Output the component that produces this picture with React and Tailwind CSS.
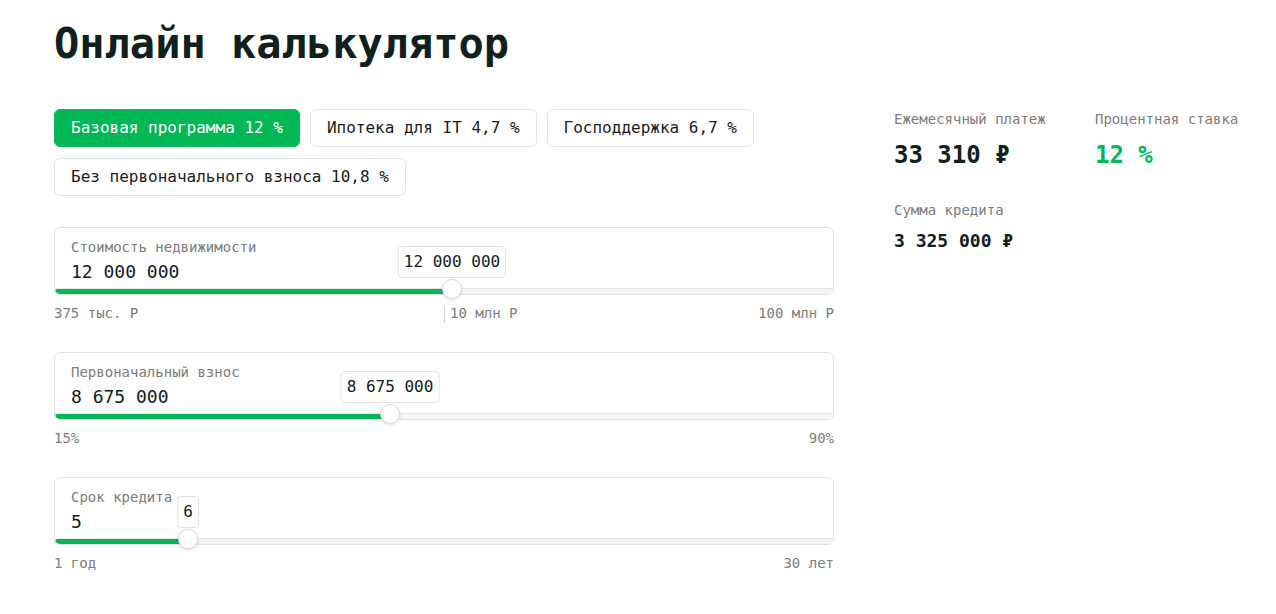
import React from "react";

const tabs = [
  { label: "Базовая программа 12 %", active: true },
  { label: "Ипотека для IT 4,7 %" },
  { label: "Господдержка 6,7 %" },
  { label: "Без первоначального взноса 10,8 %" },
];

const sliders = [
  {
    label: "Стоимость недвижимости",
    value: "12 000 000",
    pos: 398,
    min: "375 тыс. Р",
    max: "100 млн Р",
    mid: "10 млн Р",
  },
  {
    label: "Первоначальный взнос",
    value: "8 675 000",
    pos: 336,
    min: "15%",
    max: "90%",
  },
  {
    label: "Срок кредита",
    value: "5",
    tip: "6",
    pos: 134,
    min: "1 год",
    max: "30 лет",
  },
];

function Slider({ item, first }) {
  return (
    <div className={first ? "mt-[31px]" : "mt-[29px]"}>
      <div className="flex flex-col overflow-hidden rounded-md border border-[#e2e2e2] bg-white">
        <div className="px-4 pt-[9px] text-[14px] leading-5 text-[#7c7c7c]">{item.label}</div>
        <div className="mt-[3px] px-4 text-[18px] leading-6 text-[#10201c]">{item.value}</div>
        <div className="relative mt-[4px] h-[6px] border-t border-[#e6e6e6] bg-[#f5f5f5]">
          <div
            className="absolute left-0 top-0 h-[5px] rounded-full bg-[#00b956]"
            style={{ width: item.pos }}
          />
        </div>
      </div>
      <div className="relative">
        <div
          className="absolute bottom-[-4px] h-5 w-5 -translate-x-1/2 rounded-full border border-[#dcdcdc] bg-white shadow-[0_1px_3px_rgba(0,0,0,0.15)]"
          style={{ left: item.pos }}
        />
        <div
          className="absolute bottom-[17px] -translate-x-1/2 rounded border border-[#e2e2e2] bg-white px-[5px] py-[3px] text-[16px] leading-6 text-[#10201c]"
          style={{ left: item.pos }}
        >
          {item.tip || item.value}
        </div>
      </div>
      <div className="relative mt-2 flex justify-between text-[14px] leading-5 text-[#7c7c7c]">
        <span>{item.min}</span>
        {item.mid ? (
          <span className="absolute left-[390px] top-[3px] border-l border-[#cfcfcf] pl-[5px] leading-[17px]">
            <span className="relative top-[-1px]">{item.mid}</span>
          </span>
        ) : null}
        <span>{item.max}</span>
      </div>
    </div>
  );
}

export default function App() {
  return (
    <main
      className="min-h-screen bg-white pl-[54px] pt-[19px] text-[#10201c]"
      style={{ fontFamily: '"DejaVu Sans Mono", "Liberation Mono", monospace' }}
    >
      <h1 className="text-[42px] font-bold leading-[50px] text-[#10201c]">Онлайн калькулятор</h1>

      <div className="mt-10 flex">
        <section className="w-[780px] shrink-0">
          <div className="flex flex-wrap gap-x-[10px] gap-y-[11px]">
            {tabs.map((tab) => (
              <button
                key={tab.label}
                className={
                  tab.active
                    ? "rounded-md border border-[#00b956] bg-[#00b956] px-4 py-[6px] text-[16px] leading-6 text-white"
                    : "rounded-md border border-[#e4e4e4] bg-white px-4 py-[6px] text-[16px] leading-6 text-[#1b1b1b]"
                }
              >
                {tab.label}
              </button>
            ))}
          </div>

          {sliders.map((item, i) => (
            <Slider key={item.label} item={item} first={i === 0} />
          ))}
        </section>

        <aside className="ml-[60px] shrink-0 whitespace-nowrap">
          <div className="grid grid-cols-[201px_auto]">
            <div>
              <div className="text-[14px] leading-5 text-[#7c7c7c]">Ежемесячный платеж</div>
              <div className="mt-[10px] text-[24px] font-bold leading-8">33 310 ₽</div>
            </div>
            <div>
              <div className="text-[14px] leading-5 text-[#7c7c7c]">Процентная ставка</div>
              <div className="mt-[10px] text-[24px] font-bold leading-8 text-[#00b956]">12 %</div>
            </div>
          </div>
          <div className="mt-[29px] text-[14px] leading-5 text-[#7c7c7c]">Сумма кредита</div>
          <div className="mt-[9px] text-[18px] font-bold leading-6">3 325 000 ₽</div>
        </aside>
      </div>
    </main>
  );
}
